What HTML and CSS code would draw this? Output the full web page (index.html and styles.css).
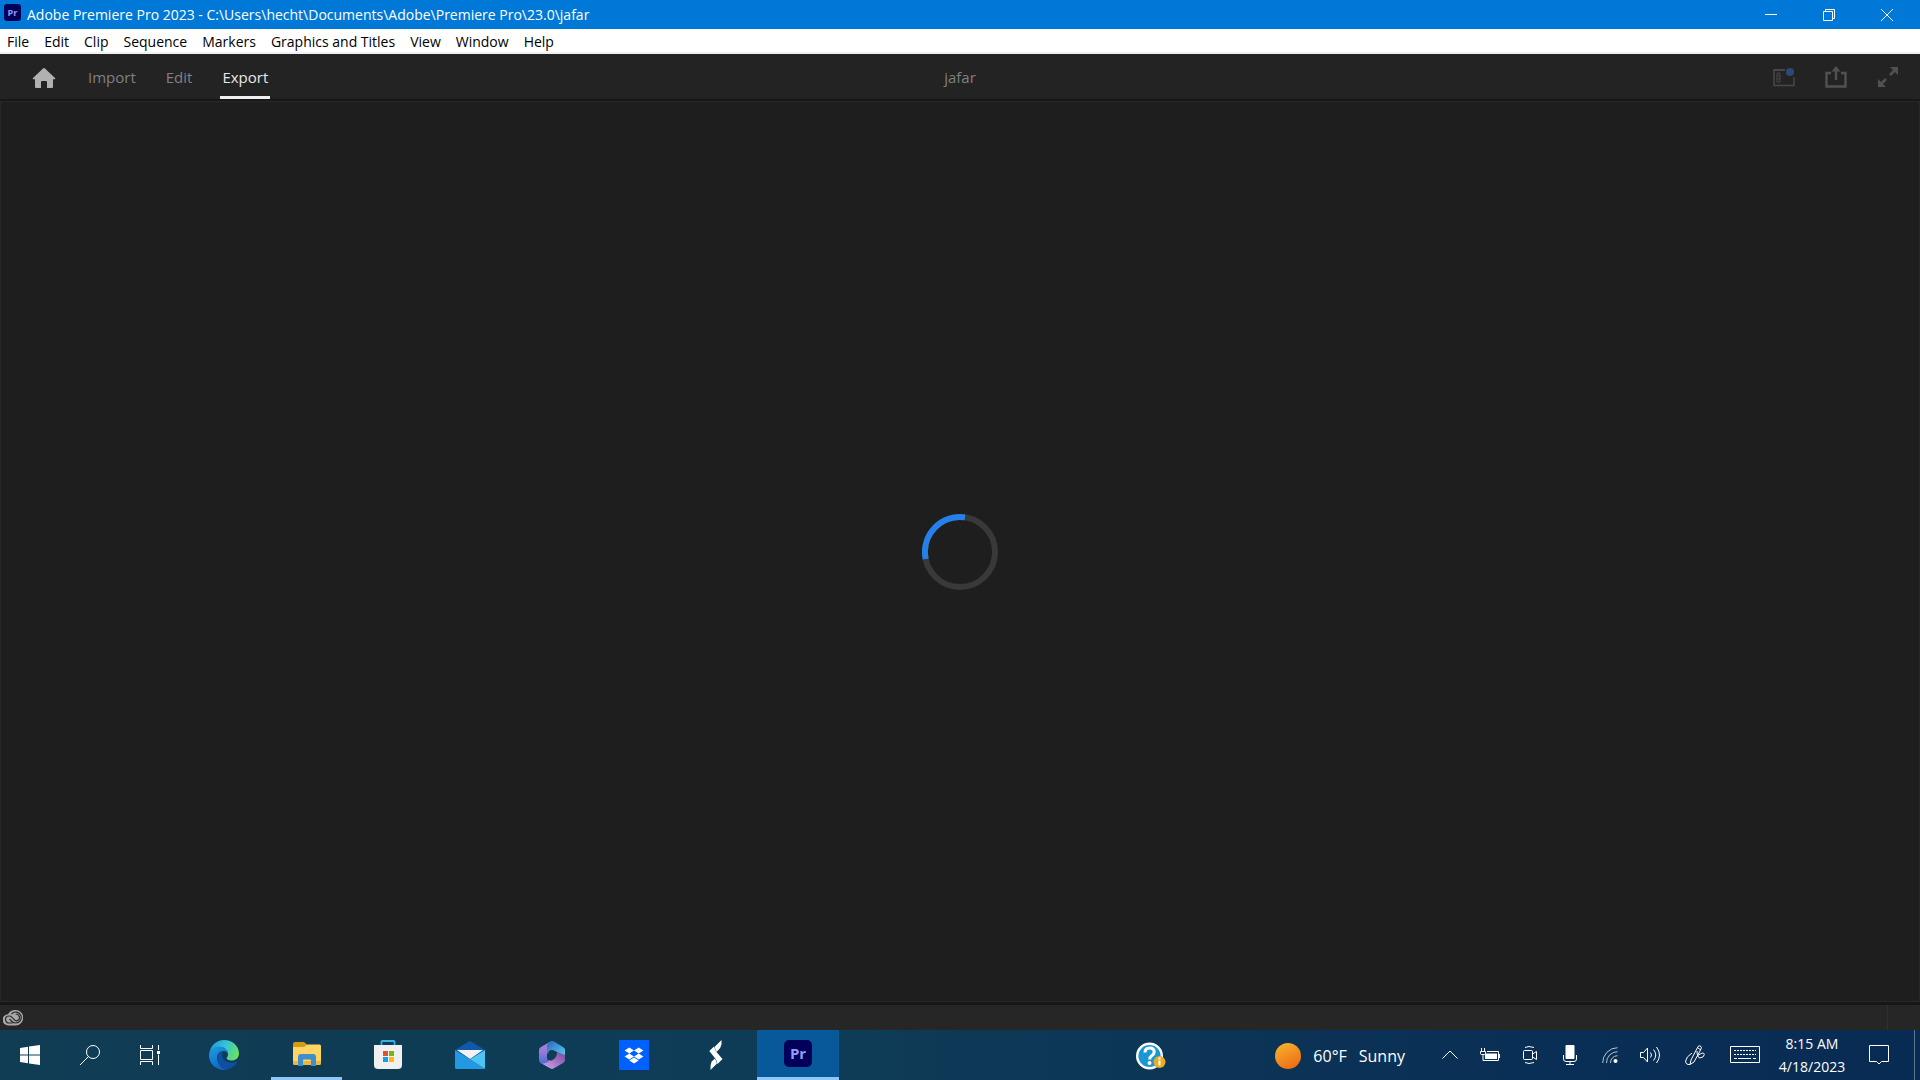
FILE: index.html
```html
<!DOCTYPE html>
<html lang="en">
<head>
    <meta charset="UTF-8">
    <title>Adobe Premiere Pro 2023</title>
    <link rel="stylesheet" href="styles.css">
</head>
<body>
    <header class="titlebar">
        <svg class="app-icon" width="17" height="17" viewBox="0 0 28 28"><rect width="28" height="28" rx="5" fill="#00005b"/><text x="14" y="19" text-anchor="middle" class="pr-text">Pr</text></svg>
        <h1 class="title">Adobe Premiere Pro 2023 - C:\Users\hecht\Documents\Adobe\Premiere Pro\23.0\jafar</h1>
        <div class="window-controls">
            <button aria-label="Minimize"><svg width="12" height="12" viewBox="0 0 12 12"><path d="M0 5.500h12"/></svg></button>
            <button aria-label="Restore"><svg width="12" height="12" viewBox="0 0 12 12"><path d="M.5 2.500h9v9h-9zM2.500 2.500v-2h9v9h-2"/></svg></button>
            <button aria-label="Close"><svg width="12" height="12" viewBox="0 0 12 12"><path d="M0 0l12 12M12 0L0 12"/></svg></button>
        </div>
    </header>

    <nav class="menubar">
        <button>File</button>
        <button>Edit</button>
        <button>Clip</button>
        <button>Sequence</button>
        <button>Markers</button>
        <button>Graphics and Titles</button>
        <button>View</button>
        <button>Window</button>
        <button>Help</button>
    </nav>

    <div class="appbar">
        <div class="tabs">
            <button class="home" aria-label="Home"><svg width="24" height="20" viewBox="0 0 24 20"><path d="M11 .5q1-.8 2 0L23 10q.8 1.200-.5 1.200H21V19q0 1-1 1h-5v-6q0-1-1-1h-4q-1 0-1 1v6H4q-1 0-1-1v-7.800H1.500Q.2 11.200 1 10z" fill="#b1b1b1"/></svg></button>
            <button class="tab">Import</button>
            <button class="tab">Edit</button>
            <button class="tab active">Export</button>
        </div>
        <div class="project">jafar</div>
        <div class="tools">
            <button aria-label="Workspaces"><svg width="22" height="20" viewBox="0 0 22 20"><path d="M12 3H1v15.500h20V10" fill="none" stroke="#484848" stroke-width="1.500"/><path d="M1 3h11" stroke="#484848" stroke-width="2"/><path d="M4 6h3v9H4zM4 9h3M4 12h3" fill="none" stroke="#484848"/><circle cx="17" cy="5" r="4" fill="#2c4a75"/></svg></button>
            <button aria-label="Quick export"><svg width="22" height="22" viewBox="0 0 22 22"><path d="M6 7H1.500v13.500h19V7H16M11 14V4" fill="none" stroke="#515151" stroke-width="2.400"/><path d="M11 0l4.500 5.500h-9z" fill="#515151"/></svg></button>
            <button aria-label="Maximize"><svg width="22" height="22" viewBox="0 0 22 22"><path d="M13 9l5-5M9 13l-5 5" stroke="#515151" stroke-width="2.600"/><path d="M13 1h8v8zM1 13v8h8z" fill="#515151"/></svg></button>
        </div>
    </div>

    <main class="workspace">
        <svg class="spinner" width="76" height="76" viewBox="0 0 76 76" role="progressbar" aria-label="Loading">
            <circle cx="38" cy="38" r="35" stroke="#393939"/>
            <path d="M3.700 45A35 35 0 0 1 43 3.360" stroke="#2680eb"/>
        </svg>
    </main>

    <footer class="statusbar">
        <svg width="20" height="16" viewBox="0 0 20 16"><path d="M12.500 0a7.500 7.500 0 0 1 0 15.500H5.500A5.500 5.500 0 0 1 5 4.200Q7.500 0 12.500 0z" fill="#a8a8a8"/><path d="M9.500 13H6a3.500 3.500 0 0 1 0-7q1.700 0 3 1.300l3 3q1.500 1.300 3 0a3.500 3.500 0 0 0-2.300-6.300M8.500 4A5.500 5.500 0 1 1 12.500 13q-2 0-3.500-1.500L6.500 9" fill="none" stroke="#2a2a2a" stroke-width="1.200"/></svg>
        <span class="grip"></span>
    </footer>

    <div class="taskbar">
        <div class="system">
            <button aria-label="Start"><svg width="20" height="20" viewBox="0 0 20 20" fill="#fff"><path d="M0 3l8-1.200v7.700H0zM9 1.600L20 0v9.500H9zM0 10.500h8v7.700L0 17zM9 10.500h11V20L9 18.400z"/></svg></button>
            <button aria-label="Search"><svg class="line" width="20" height="20" viewBox="0 0 20 20"><circle cx="13" cy="7" r="6.500"/><path d="M8.500 11.500L0 20"/></svg></button>
            <button aria-label="Task view"><svg class="line" width="20" height="20" viewBox="0 0 20 20"><path d="M.5 0v3.500h12V0M.5 5.500h12v9H.5zM.5 20v-3.500h12V20M18.500 0v5M18.500 9.500V20"/><path d="M17 6h3v3h-3z" fill="#fff" stroke="none"/></svg></button>
        </div>
        <div class="apps">
            <button aria-label="Microsoft Edge">
                <svg width="30" height="30" viewBox="0 0 30 30">
                    <defs>
                        <linearGradient id="edge-top" x1="0" y1=".3" x2="1" y2=".6"><stop offset="0" stop-color="#2499dd"/><stop offset=".5" stop-color="#35c4d4"/><stop offset="1" stop-color="#6ce25c"/></linearGradient>
                        <linearGradient id="edge-left" x1="0" y1="0" x2=".5" y2="1"><stop offset="0" stop-color="#1ea0e4"/><stop offset="1" stop-color="#1065bd"/></linearGradient>
                    </defs>
                    <path d="M.5 13C1.500 5.500 7.500 0 15 0c8.500 0 15 6 15 13.500 0 4.500-3.500 7-7.500 7-3 0-5-1-5-2.200 0-.8 1.500-1.500 1.500-4C19 10.500 15.500 7 10.500 7 5 7 1.800 9.500.5 13z" fill="url(#edge-top)"/>
                    <path d="M0 15c0-5 4.500-8.500 10.500-8.500 5 0 8.500 3.500 8.500 7-1-1.500-2.500-2.500-4.500-2.500-5 0-8 5-5.500 11 1.500 4 5 7 9 7.500-1 .3-2 .5-3 .5C6.500 30 0 23.500 0 15z" fill="url(#edge-left)"/>
                    <path d="M14.500 11c-4.500.5-7.500 5.500-5.500 11 1.500 4 5 7 9 7.500 4-.7 8-3.500 10-7 .5-1-.3-1.400-1-1-6 3-13 0-14-6-.2-2 .3-3.500 1.500-4.500z" fill="#0d4fa0"/>
                </svg>
            </button>
            <button class="open" aria-label="File Explorer">
                <svg width="28" height="24" viewBox="0 0 28 24"><path d="M0 2q0-2 2-2h9l3 2.500L12 5H0z" fill="#d39a13"/><path d="M0 5h11l3-2.500h12.500Q28 2.500 28 4v17q0 2-2 2H2q-2 0-2-2z" fill="#ffd663"/><path d="M0 19h28v2q0 2-2 2H2q-2 0-2-2z" fill="#efb83c"/><path d="M5 24v-9q0-3 3-3h12q3 0 3 3v9h-5v-5.500q0-1-1-1h-6q-1 0-1 1V24z" fill="#3d8fcf"/></svg>
            </button>
            <button aria-label="Microsoft Store">
                <svg width="30" height="30" viewBox="0 0 30 30"><path d="M8.500 6V2q0-1 1-1h11q1 0 1 1v4" fill="none" stroke="#3daee4" stroke-width="1.800"/><path d="M1 5h28v20q0 4-4 4H5q-4 0-4-4z" fill="#f0f0f0"/><path d="M10 11h5v5h-5z" fill="#e3502d"/><path d="M16 11h5v5h-5z" fill="#7bb514"/><path d="M10 17h5v5h-5z" fill="#149fe7"/><path d="M16 17h5v5h-5z" fill="#fdb913"/></svg>
            </button>
            <button aria-label="Mail">
                <svg width="30" height="28" viewBox="0 0 30 28"><path d="M0 9L14 .4q1-.6 2 0L30 9l-15 9z" fill="#1258a8"/><path d="M2 9h26l-13 9z" fill="#f2f2f2"/><path d="M0 9l30 18.500q-.5.500-1.500.5h-27Q0 28 0 26.500z" fill="#2499e3"/><path d="M15 18.300L30 9v17.500q0 .7-.3 1z" fill="#4cc5f5"/></svg>
            </button>
            <button aria-label="Microsoft 365">
                <svg width="26" height="28" viewBox="0 0 26 28">
                    <defs>
                        <linearGradient id="m365-a" x1="0" y1="0" x2="0" y2="1"><stop offset="0" stop-color="#a884dc"/><stop offset=".5" stop-color="#9479d8"/><stop offset="1" stop-color="#3f6fd0"/></linearGradient>
                        <linearGradient id="m365-b" x1="0" y1="0" x2="1" y2="1"><stop offset="0" stop-color="#3263b8"/><stop offset="1" stop-color="#55cdf5"/></linearGradient>
                        <linearGradient id="m365-c" x1="0" y1="1" x2="1" y2="0"><stop offset="0" stop-color="#d7a6ef"/><stop offset="1" stop-color="#77479d"/></linearGradient>
                    </defs>
                    <path d="M12 .3L2 6Q0 7 0 9v10q0 2.500 2 3.500 4 2 7-3.500-1-1-1-2.500V9q0-1 1-1.500z" fill="url(#m365-a)"/>
                    <path d="M12 .3q1.500-.6 3 .2L24 6q2 1 2 3v6l-9-4.500q-2.500-2-5-1.500-3 .8-3 4-1.500-1-1-4V4q1-2.500 4-3.700z" fill="url(#m365-b)"/>
                    <path d="M26 14v5q0 2-2 3l-9.500 5.500q-1.500.8-3 0L3 22.800q5-.8 7-3.800 2 1 3.500 0 4.500-2 4.500-8z" fill="url(#m365-c)"/>
                </svg>
            </button>
            <button aria-label="Dropbox">
                <svg width="30" height="30" viewBox="0 0 30 30"><path d="M0 0h30v30H0z" fill="#0061fe"/><path d="M10.300 7.500l4.700 3-4.700 3-4.700-3zM19.700 7.500l4.700 3-4.700 3-4.700-3zM10.300 13.500l4.700 3-4.700 3-4.700-3zM19.700 13.500l4.700 3-4.700 3-4.700-3zM15 17.500l4.700 3-4.700 3-4.700-3z" fill="#fff"/></svg>
            </button>
            <button aria-label="Stream">
                <svg width="14" height="30" viewBox="0 0 14 30" fill="#fff"><path d="M12.500 0q.8 4.500-1.300 8L7.500 12 5.500 7z"/><path d="M5 6.500l2 5L13.500 19 8.500 24 7 19.500.3 11z"/><path d="M1.500 30q-.6-5 1.200-8.500L6 18.500l2 5z"/></svg>
            </button>
            <button class="open current" aria-label="Adobe Premiere Pro">
                <svg width="28" height="28" viewBox="0 0 28 28"><rect width="28" height="27" rx="5" fill="#00005b"/><text x="14" y="19" text-anchor="middle" class="pr-text">Pr</text></svg>
            </button>
        </div>
        <button class="help" aria-label="Help">
            <svg width="30" height="28" viewBox="0 0 30 28"><circle cx="13.500" cy="14" r="12.300" fill="#1798d5" stroke="#fff" stroke-width="2.400"/><path d="M9 10.500q0-4.500 4.700-4.500 4.500 0 4.500 4 0 2.200-2.500 3.800-2 1.400-2 3.700" fill="none" stroke="#fff" stroke-width="3"/><circle cx="13.500" cy="21" r="2" fill="#fff"/><circle cx="23.500" cy="20" r="6" fill="#eeaa24"/><path d="M23.500 18.500v5M23.500 15.500v2" stroke="#fff" stroke-width="2"/></svg>
        </button>
        <button class="weather">
            <svg width="26" height="26" viewBox="0 0 26 26"><defs><linearGradient id="sun" x1=".2" y1="0" x2=".7" y2="1"><stop offset="0" stop-color="#f4b32f"/><stop offset="1" stop-color="#ef6a12"/></linearGradient></defs><circle cx="13" cy="13" r="13" fill="url(#sun)"/></svg>
            <span>60°F</span>
            <span>Sunny</span>
        </button>
        <div class="tray">
            <button aria-label="Show hidden icons"><svg class="line" width="16" height="10" viewBox="0 0 16 10"><path d="M.5 8.500L8 1l7.500 7.500"/></svg></button>
            <button aria-label="Battery"><svg class="line" width="20" height="16" viewBox="0 0 20 16"><path d="M1.500 1v3M4.500 1v3M.5 4.500h5v2q0 1-1 1h-3q-1 0-1-1zM3 8v5.500h15.500v-9H7M19.500 7v4"/><path d="M5 6.500h12V12H5z" fill="#fff" stroke="none"/></svg></button>
            <button aria-label="Meet now"><svg class="line" width="16" height="20" viewBox="0 0 16 20"><rect x="1.500" y="5.500" width="9" height="9" rx="1"/><path d="M10.500 9l4-2.500v8l-4-2.500M3 2.500q3.500-2 9 0M3 17.500q3.500 2 9 0"/></svg></button>
            <button aria-label="Microphone"><svg class="line" width="14" height="20" viewBox="0 0 14 20"><rect x="2.500" y="0" width="9" height="14" rx="1" fill="#fff" stroke="none"/><path d="M.5 10v4q0 2.500 2.500 2.500h8q2.500 0 2.500-2.500v-4M7 16.500v3M3 19.500h8"/></svg></button>
            <button aria-label="Network"><svg class="line faint" width="16" height="16" viewBox="0 0 16 16"><path d="M.7 16A15 15 0 0 1 15.500.7M4.500 16A11 11 0 0 1 15.500 4.700M8.500 16A7 7 0 0 1 15.500 8.700"/><circle cx="13.500" cy="14" r="2" fill="#fff" stroke="none"/></svg></button>
            <button aria-label="Volume"><svg class="line" width="20" height="18" viewBox="0 0 20 18"><path d="M.5 6.500h3l4-4.500v14l-4-4.500h-3zM10.500 6.500q2 2.500 0 5M13.500 3.500q4.500 5.500 0 11M16.500 1q6 8 0 16"/></svg></button>
            <button class="wide" aria-label="Pen"><svg class="line" width="20" height="20" viewBox="0 0 20 20"><path d="M6 15L13 1.500q1.500-1.500 3 0 .8 1 0 2.500L9 17l-4 2.500zM13 3l3 2M7 8Q1 12 .6 16q0 4 4.400 3.500M12 11q7-5 7.300-1.500-.3 3-4.300 3.500-3-.5-3-7"/></svg></button>
            <button class="wide" aria-label="Touch keyboard"><svg class="line" width="30" height="18" viewBox="0 0 30 18"><path d="M.5.5h29v16H.5z"/><path d="M4 4.500h22M4 8.500h22" stroke-dasharray="2 1"/><path d="M4 12.500h3M8 12.500h13M23 12.500h3"/></svg></button>
        </div>
        <button class="clock"><time>8:15 AM</time><time>4/18/2023</time></button>
        <button class="notifications" aria-label="Notifications"><svg class="line" width="20" height="20" viewBox="0 0 20 20"><path d="M.5.5h19v16h-7L10 19l-2.500-2.500h-7z"/></svg></button>
        <button class="show-desktop" aria-label="Show desktop"></button>
    </div>
</body>
</html>
```

FILE: styles.css
```css
* { box-sizing: border-box; }
body { display: flex; flex-direction: column; height: 100vh; margin: 0; overflow: hidden; background-color: #171717; font-family: "Open Sans", sans-serif; font-size: 14px; }
button { display: flex; align-items: center; justify-content: center; padding: 0; border: none; background: none; color: inherit; font: inherit; }
svg { display: block; flex: none; }
.pr-text { fill: #9999ff; font-size: 15px; font-weight: bold; }

.titlebar { display: flex; align-items: center; height: 29px; padding: 0 4px 0 4px; background-color: #0078d7; color: white; }
.app-icon { margin-bottom: 4px; }
.title { flex: 1; margin: 0 0 0 6px; font-size: 14px; font-weight: normal; line-height: 20px; }
.window-controls { display: flex; align-self: stretch; }
.window-controls button { width: 58px; }
.window-controls svg { fill: none; stroke: white; }

.menubar { display: flex; height: 25px; padding: 1px 0 0 7px; gap: 15px; border-bottom: 2px solid #f0f0f0; background-color: white; color: black; }

.appbar { display: grid; grid-template-columns: 1fr auto 1fr; height: 47px; border-bottom: 2px solid #171717; background-color: #232323; color: #808080; font-size: 15px; }
.tabs { display: flex; padding-left: 32px; }
.home { margin-right: 30px; padding-top: 2px; }
.tab { margin-right: 26px; padding: 4px 2px 0; border-bottom: 3px solid transparent; }
.tab.active { border-bottom-color: #f0f0f0; color: #e8e8e8; }
.project { align-self: center; padding-top: 1px; }
.tools { display: flex; justify-content: flex-end; gap: 30px; padding-right: 21px; }

.workspace { display: flex; flex: 1; align-items: center; justify-content: center; border: 1px solid #282828; background-color: #1e1e1e; }
.spinner { fill: none; stroke-width: 6px; }

.statusbar { display: flex; align-items: center; justify-content: space-between; height: 28px; padding: 0 32px 0 3px; border-top: 3px solid #171717; background-color: #262626; }
.grip { align-self: stretch; border-left: 1px solid #303030; }

.taskbar { display: flex; height: 50px; background: linear-gradient(to right, #103d54, #0e3b56 45%, #0a3056 75%, #082b54); color: white; font-size: 16px; }
.line { fill: none; stroke: white; }
.faint { stroke: #b8c4d2; }
.system, .apps, .tray { display: flex; }
.system button { width: 60px; }
.apps { margin-left: 3px; }
.apps button { width: 82px; padding-top: 3px; border-bottom: 3px solid transparent; }
.apps .open { width: 71px; margin: 0 5px 0 6px; padding-top: 0; border-bottom-color: #8fc6f5; }
.apps .current { width: 82px; margin: 0; background-color: #07599a; background-clip: padding-box; }
.help { margin-left: auto; margin-right: 109px; padding-top: 2px; }
.weather { gap: 12px; margin-right: 25px; padding-top: 1px; }
.tray button { width: 40px; }
.tray .wide { width: 50px; }
.clock { flex-direction: column; width: 84px; font-size: 14px; line-height: 23px; }
.notifications { width: 50px; margin-right: 10px; }
.show-desktop { width: 6px; border-left: 1px solid #5c7690; }
```
